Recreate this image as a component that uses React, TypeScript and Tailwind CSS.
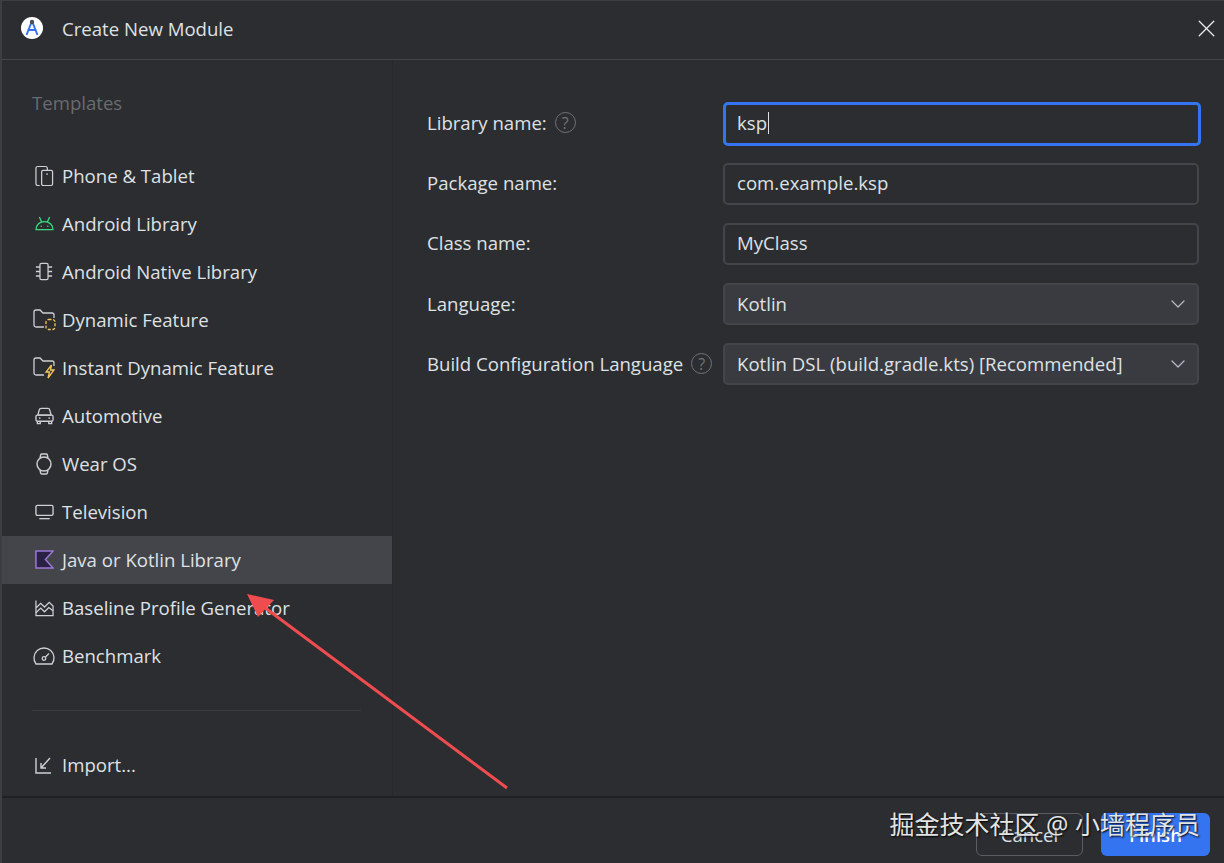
import React from 'react';
import { X, ChevronDown } from 'lucide-react';

const font = "font-['Open_Sans','Noto_Sans_CJK_SC',sans-serif]";

const PhoneIcon = () => (
  <svg width="19" height="22" viewBox="0 0 20 22" fill="none" stroke="#ced0d6" strokeWidth="1.3">
    <path d="M5 21H3a2 2 0 0 1-2-2V3a2 2 0 0 1 2-2h8a2 2 0 0 1 2 2v2" />
    <rect x="7" y="5" width="11.5" height="16" rx="1.5" />
    <path d="M12.7 8v2" />
  </svg>
);
const AndroidIcon = () => (
  <svg width="19" height="15" viewBox="0 0 20 16" fill="none" stroke="#3ddc84" strokeWidth="1.4">
    <path d="M1 14.5c0-5 4-8.5 9-8.5s9 3.500 9 8.500H1Z" />
    <path d="M4.500 1 7 6.500M15.500 1 13 6.500" />
    <circle cx="6.500" cy="11" r=".8" fill="#3ddc84" stroke="none" />
    <circle cx="13.500" cy="11" r=".8" fill="#3ddc84" stroke="none" />
  </svg>
);
const ChipIcon = () => (
  <svg width="18" height="19" viewBox="0 0 20 20" fill="none" stroke="#ced0d6" strokeWidth="1.4">
    <rect x="5.500" y="1" width="9" height="18" rx="1.500" />
    <path d="M1 5h4.500M1 10h4.500M1 15h4.500M14.500 5H19M14.500 10H19M14.500 15H19" />
  </svg>
);
const FolderDynamicIcon = () => (
  <svg width="23" height="22" viewBox="0 0 23 22" fill="none" strokeWidth="1.3">
    <path d="M11 18H3a2 2 0 0 1-2-2V3a2 2 0 0 1 2-2h4l3 3h9a2 2 0 0 1 2 2v3" stroke="#ced0d6" />
    <rect x="13" y="10.500" width="9" height="10" rx="2.500" stroke="#f2c55c" strokeDasharray="3 1.600" />
  </svg>
);
const FolderBoltIcon = () => (
  <svg width="23" height="22" viewBox="0 0 23 22" fill="none" strokeWidth="1.3">
    <path d="M11 18H3a2 2 0 0 1-2-2V3a2 2 0 0 1 2-2h4l3 3h9a2 2 0 0 1 2 2v3" stroke="#ced0d6" />
    <path d="M18.500 8 13 15h3.500l-1.500 6 6-8h-3.500l1-5Z" stroke="#f2c55c" />
  </svg>
);
const CarIcon = () => (
  <svg width="19" height="18" viewBox="0 0 20 18" fill="none" stroke="#ced0d6" strokeWidth="1.400">
    <path d="M3 8l1.500-5.500A2 2 0 0 1 6.400 1h7.200a2 2 0 0 1 1.900 1.500L17 8" />
    <rect x="1" y="8" width="18" height="6.500" rx="1.500" />
    <path d="M2.500 14.500V17h3v-2.500M14.500 14.500V17h3v-2.500M3 8h14" />
    <circle cx="5" cy="11.200" r=".9" fill="#ced0d6" stroke="none" />
    <circle cx="15" cy="11.200" r=".9" fill="#ced0d6" stroke="none" />
  </svg>
);
const WatchIcon = () => (
  <svg width="16" height="22" viewBox="0 0 16 22" fill="none" stroke="#ced0d6" strokeWidth="1.400">
    <circle cx="8" cy="11" r="7" />
    <path d="M4 5l.7-3.200a1 1 0 0 1 1-.8h4.600a1 1 0 0 1 1 .8L12 5M4 17l.7 3.200a1 1 0 0 0 1 .8h4.600a1 1 0 0 0 1-.8L12 17" />
  </svg>
);
const TvIcon = () => (
  <svg width="19" height="16" viewBox="0 0 20 16" fill="none" stroke="#ced0d6" strokeWidth="1.400">
    <rect x="1" y="1" width="18" height="10.500" rx="1.500" />
    <path d="M4.500 15h11" />
  </svg>
);
const KotlinIcon = () => (
  <svg width="19" height="19" viewBox="0 0 20 20" fill="none">
    <path d="M1 1h18l-8 9 8 9H1V1Z" fill="#2b2144" stroke="#9a78d6" strokeWidth="1.600" />
  </svg>
);
const ProfileIcon = () => (
  <svg width="19" height="18" viewBox="0 0 20 18" fill="none" stroke="#ced0d6" strokeWidth="1.300">
    <path d="M1 1v16h18V7l-4-4-5 5-4-4-5 5" />
    <path d="M1 14l5-5 4 4 4.500-4.500L19 12" />
  </svg>
);
const GaugeIcon = () => (
  <svg width="22" height="18" viewBox="0 0 22 18" fill="none" stroke="#ced0d6" strokeWidth="1.300">
    <path d="M3 17h16a10 10 0 1 0-16 0Z" />
    <circle cx="11" cy="11.500" r="1.800" />
    <path d="M12.500 10l3.500-3.500" />
  </svg>
);
const ImportIcon = () => (
  <svg width="18" height="18" viewBox="0 0 18 18" fill="none" stroke="#ced0d6" strokeWidth="1.400">
    <path d="M1 2v15h15" />
    <path d="M6 7v5h5M6 12l9-10" />
  </svg>
);

const templates = [
  { label: 'Phone & Tablet', icon: <PhoneIcon /> },
  { label: 'Android Library', icon: <AndroidIcon /> },
  { label: 'Android Native Library', icon: <ChipIcon /> },
  { label: 'Dynamic Feature', icon: <FolderDynamicIcon /> },
  { label: 'Instant Dynamic Feature', icon: <FolderBoltIcon /> },
  { label: 'Automotive', icon: <CarIcon /> },
  { label: 'Wear OS', icon: <WatchIcon /> },
  { label: 'Television', icon: <TvIcon /> },
  { label: 'Java or Kotlin Library', icon: <KotlinIcon />, active: true },
  { label: 'Baseline Profile Generator', icon: <ProfileIcon /> },
  { label: 'Benchmark', icon: <GaugeIcon /> },
];

const HelpIcon = () => (
  <span className="flex h-[21px] w-[21px] items-center justify-center rounded-full border-[1.5px] border-[#6f737a] text-[16px] leading-none text-[#6f737a]">?</span>
);

const FormRow = ({ label, help, raised, children }: { label: string; help?: boolean; raised?: boolean; children: React.ReactNode }) => (
  <div className="flex h-[44px] items-center">
    <div className={`flex w-[296px] items-center gap-[8px] text-[#dfe1e5] ${raised ? 'pb-[2px]' : ''}`}>
      <span>{label}</span>
      {help && <HelpIcon />}
    </div>
    {children}
  </div>
);

const TextBox = ({ value }: { value: string }) => (
  <div className="flex h-[42px] w-[476px] items-center rounded-[5px] border-2 border-[#43454a] px-[12px] pb-[2px] text-[#dfe1e5]">{value}</div>
);

const Select = ({ value }: { value: string }) => (
  <div className="flex h-[42px] w-[476px] items-center justify-between rounded-[5px] border-2 border-[#43454a] bg-[#393b40] pl-[12px] pr-[7px] text-[#dfe1e5]">
    <span>{value}</span>
    <ChevronDown size={24} color="#b4b8bf" strokeWidth={1.3} />
  </div>
);

export default function App() {
  return (
    <div className={`${font} relative flex h-[863px] w-[1224px] flex-col overflow-hidden border-l-2 border-t border-[#3c3e42] bg-[#2b2d30] text-[18.6px]`}>
      {/* title bar */}
      <header className="flex h-[59px] shrink-0 items-center justify-between border-b border-[#43454a] pb-[3px] pl-[19px] pr-[3px]">
        <div className="flex items-center gap-[19px]">
          <svg width="22" height="22" viewBox="0 0 22 22">
            <circle cx="11" cy="11" r="11" fill="#ffffff" />
            <path d="M11 4 5.500 18M11 4l5.500 14M6.500 13h9" stroke="#3574f0" strokeWidth="2" fill="none" />
            <circle cx="11" cy="5" r="2.200" fill="#4a4e55" />
          </svg>
          <span className="text-[#dfe1e5]">Create New Module</span>
        </div>
        <X size={29} color="#e8e9ec" strokeWidth={1.1} />
      </header>

      <div className="flex min-h-0 flex-1">
        {/* templates sidebar */}
        <aside className="flex w-[391px] shrink-0 flex-col border-r border-[#26282b]">
          <div className="pl-[30px] pt-[29px] text-[#686b70]">Templates</div>
          <ul className="mt-[35px]">
            {templates.map(t => (
              <li key={t.label} className={`flex h-[48px] items-center pl-[28px] ${t.active ? 'bg-[#43454a]' : ''}`}>
                <span className="flex w-[28px] shrink-0 items-center justify-center">{t.icon}</span>
                <span className="ml-[4px] text-[#dfe1e5]">{t.label}</span>
              </li>
            ))}
          </ul>
          <div className="ml-[30px] mr-[31px] mt-[30px] border-t border-[#393b40]" />
          <div className="mt-[30px] flex h-[48px] items-center pl-[28px]">
            <span className="flex w-[28px] shrink-0 items-center justify-center">
              <ImportIcon />
            </span>
            <span className="ml-[4px] text-[#dfe1e5]">Import...</span>
          </div>
        </aside>

        {/* form */}
        <main className="flex flex-1 flex-col gap-[16px] pl-[34px] pt-[42px]">
          <FormRow label="Library name:" help raised>
            <div className="flex h-[44px] w-[478px] items-center rounded-[5px] border-[3px] border-[#3574f0] px-[11px] pb-[2px] text-[#dfe1e5]">
              ksp<span className="ml-px h-[22px] w-px bg-[#dfe1e5]" />
            </div>
          </FormRow>
          <FormRow label="Package name:" raised><TextBox value="com.example.ksp" /></FormRow>
          <FormRow label="Class name:" raised><TextBox value="MyClass" /></FormRow>
          <FormRow label="Language:"><Select value="Kotlin" /></FormRow>
          <FormRow label="Build Configuration Language" help><Select value="Kotlin DSL (build.gradle.kts) [Recommended]" /></FormRow>
        </main>
      </div>

      {/* footer */}
      <footer className="flex h-[67px] shrink-0 items-start justify-end gap-[18px] border-t-2 border-[#1f2022] pr-[14px] pt-[15px]">
        <div className="flex h-[43px] w-[107px] items-center justify-center rounded-[6px] border border-[#5a5d63] text-[#dfe1e5]">Cancel</div>
        <div className="flex h-[43px] w-[109px] items-center justify-center rounded-[6px] bg-[#3574f0] font-semibold text-white">Finish</div>
      </footer>

      {/* annotation arrow pasted over the shot */}
      <svg className="absolute left-[-2px] top-[-1px]" width="1224" height="863" viewBox="0 0 1224 863" fill="none">
        <path d="M507 788 264 607" stroke="#ef4c50" strokeWidth="3" />
        <path d="M247 594 274 600 258 617Z" fill="#ef4c50" />
      </svg>

      {/* site watermark */}
      <div className="absolute right-[24px] top-[805px] text-[25px] leading-[36px] text-[#e4e4e4] [text-shadow:1px_1px_2px_#000]">掘金技术社区 @ 小墙程序员</div>
    </div>
  );
}
